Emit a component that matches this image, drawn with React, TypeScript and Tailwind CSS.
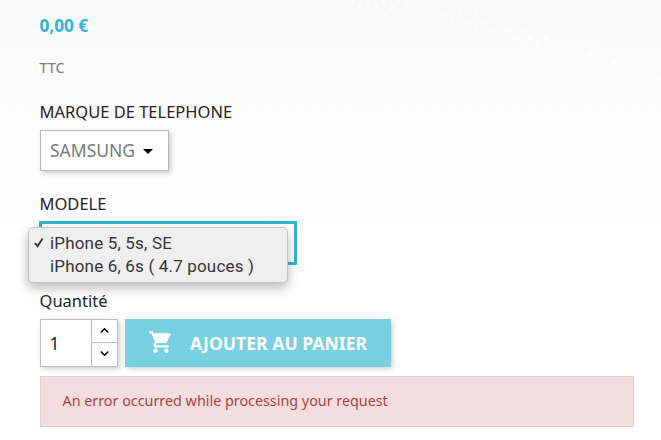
import { MdKeyboardArrowDown, MdKeyboardArrowUp, MdShoppingCart } from "react-icons/md";

const MODELES = ["iPhone 5, 5s, SE", "iPhone 6, 6s ( 4.7 pouces )"];

// Bright halftone band that crosses the top right of the page
const STEP = 7.7;
const BAND = Array.from({ length: 12 * 41 }, (_, i) => {
  const row = Math.floor(i / 41);
  const col = i % 41;
  const x = 352.6 + col * STEP;
  const y = 0.3 + row * STEP;
  const d = x - 360;
  const gap = Math.abs(y - (1 + 0.16 * d + 0.00031 * d * d));
  return { x, y, r: (row + col) % 2 === 0 && gap < 13 ? 2.1 - gap * 0.06 : 0 };
}).filter((p) => p.r > 0);

function Backdrop() {
  return (
    <svg className="absolute inset-0 h-full w-full" aria-hidden>
      <defs>
        <pattern id="dots" width="15.4" height="15.4" patternUnits="userSpaceOnUse">
          <circle cx="6.1" cy="1" r="1" fill="#fff" opacity="0.6" />
          <circle cx="13.8" cy="8.7" r="1" fill="#fff" opacity="0.6" />
        </pattern>
      </defs>
      <rect width="661" height="110" fill="url(#dots)" />
      <g fill="#fff" opacity="0.9">
        {BAND.map((p) => (
          <circle key={`${p.x}-${p.y}`} cx={p.x} cy={p.y} r={p.r} />
        ))}
      </g>
    </svg>
  );
}

function ModeleSelect() {
  return (
    <div className="relative -ml-px h-11 w-[258px] border-[3px] border-[#2fb5d2] bg-white">
      <ul className="absolute -left-[14px] top-[3px] h-[56px] w-[260px] rounded-[5px] border border-[#c4c4c4] bg-[#efefef] pt-[3px] font-['Roboto','Inter',sans-serif] text-[17px] tracking-[0.17px] text-[#353535] shadow-[0_5px_12px_rgba(0,0,0,0.28)]">
        {MODELES.map((modele, i) => (
          <li key={modele} className="flex h-[23px] items-center whitespace-nowrap">
            <span className="w-[21px] pl-[5px]">
              {i === 0 && (
                <svg width="10" height="11" viewBox="0 0 10 11" fill="none">
                  <path d="M1 6.2l2.6 3L8.6 1.4" stroke="#353535" strokeWidth="1.9" />
                </svg>
              )}
            </span>
            {modele}
          </li>
        ))}
      </ul>
    </div>
  );
}

function Quantity() {
  return (
    <div className="flex h-12 w-[78px] border border-[#bdbdbd] bg-white shadow-[2px_2px_5px_rgba(0,0,0,0.2)]">
      <span className="flex w-[50px] items-center pl-[8.5px] text-[17.5px] text-[#232323]">1</span>
      <div className="flex flex-1 flex-col border-l border-[#bdbdbd] text-black">
        <span className="flex h-[23px] items-center justify-center border-b border-[#bdbdbd]">
          <MdKeyboardArrowUp size={17} stroke="currentColor" className="-mt-[2px]" />
        </span>
        <span className="flex flex-1 items-center justify-center">
          <MdKeyboardArrowDown size={17} stroke="currentColor" className="-mt-[2px]" />
        </span>
      </div>
    </div>
  );
}

export default function App() {
  return (
    <main className="relative h-[440px] w-[661px] overflow-hidden bg-linear-to-b from-[#f9f9f9] to-white to-[230px] font-['Noto_Sans',sans-serif] text-[16.5px] leading-6 text-[#232323]">
      <Backdrop />
      <div className="relative flex flex-col pl-10 pt-[14px]">
        <p className="-ml-[0.5px] text-[17.2px] font-bold text-[#2fb5d2]">0,00 €</p>
        <p className="mt-[18px] -ml-[0.5px] text-[14.3px] text-[#7a7a7a]">TTC</p>

        <p className="mt-5 -ml-[0.5px]">MARQUE DE TELEPHONE</p>
        <div className="mt-[6px] flex h-[41px] w-[129px] items-center border border-[#b8b8b8] bg-white pl-[9px] text-[17.5px] text-[#7a7a7a] shadow-[2px_2px_5px_rgba(0,0,0,0.2)]">
          <span className="-mt-[2px]">SAMSUNG</span>
          <svg className="ml-[8px] mt-[2px]" width="10" height="5" viewBox="0 0 10 5">
            <path d="M0 0h10L5 5z" fill="#000" />
          </svg>
        </div>

        <p className="mt-[21px] -ml-[0.5px]">MODELE</p>
        <div className="mt-[5px]">
          <ModeleSelect />
        </div>

        <p className="mt-6 -ml-[0.5px]">Quantité</p>
        <div className="mt-[6px] flex gap-[7px]">
          <Quantity />
          <button className="flex h-12 w-[266px] items-center bg-[#79d0e1] pl-[23px] text-[17.6px] font-bold text-white shadow-[2px_2px_5px_rgba(0,0,0,0.18)]">
            <MdShoppingCart size={26} className="-mt-[2px]" />
            <span className="ml-4 -mt-px whitespace-nowrap">AJOUTER AU PANIER</span>
          </button>
        </div>

        <div className="mt-[9px] flex h-[51px] w-[594px] items-center border border-[#ebcccc] bg-[#f2dede] pl-[21.5px] pb-[2px] text-[14.33px] text-[#a94442]">
          An error occurred while processing your request
        </div>
      </div>
    </main>
  );
}
